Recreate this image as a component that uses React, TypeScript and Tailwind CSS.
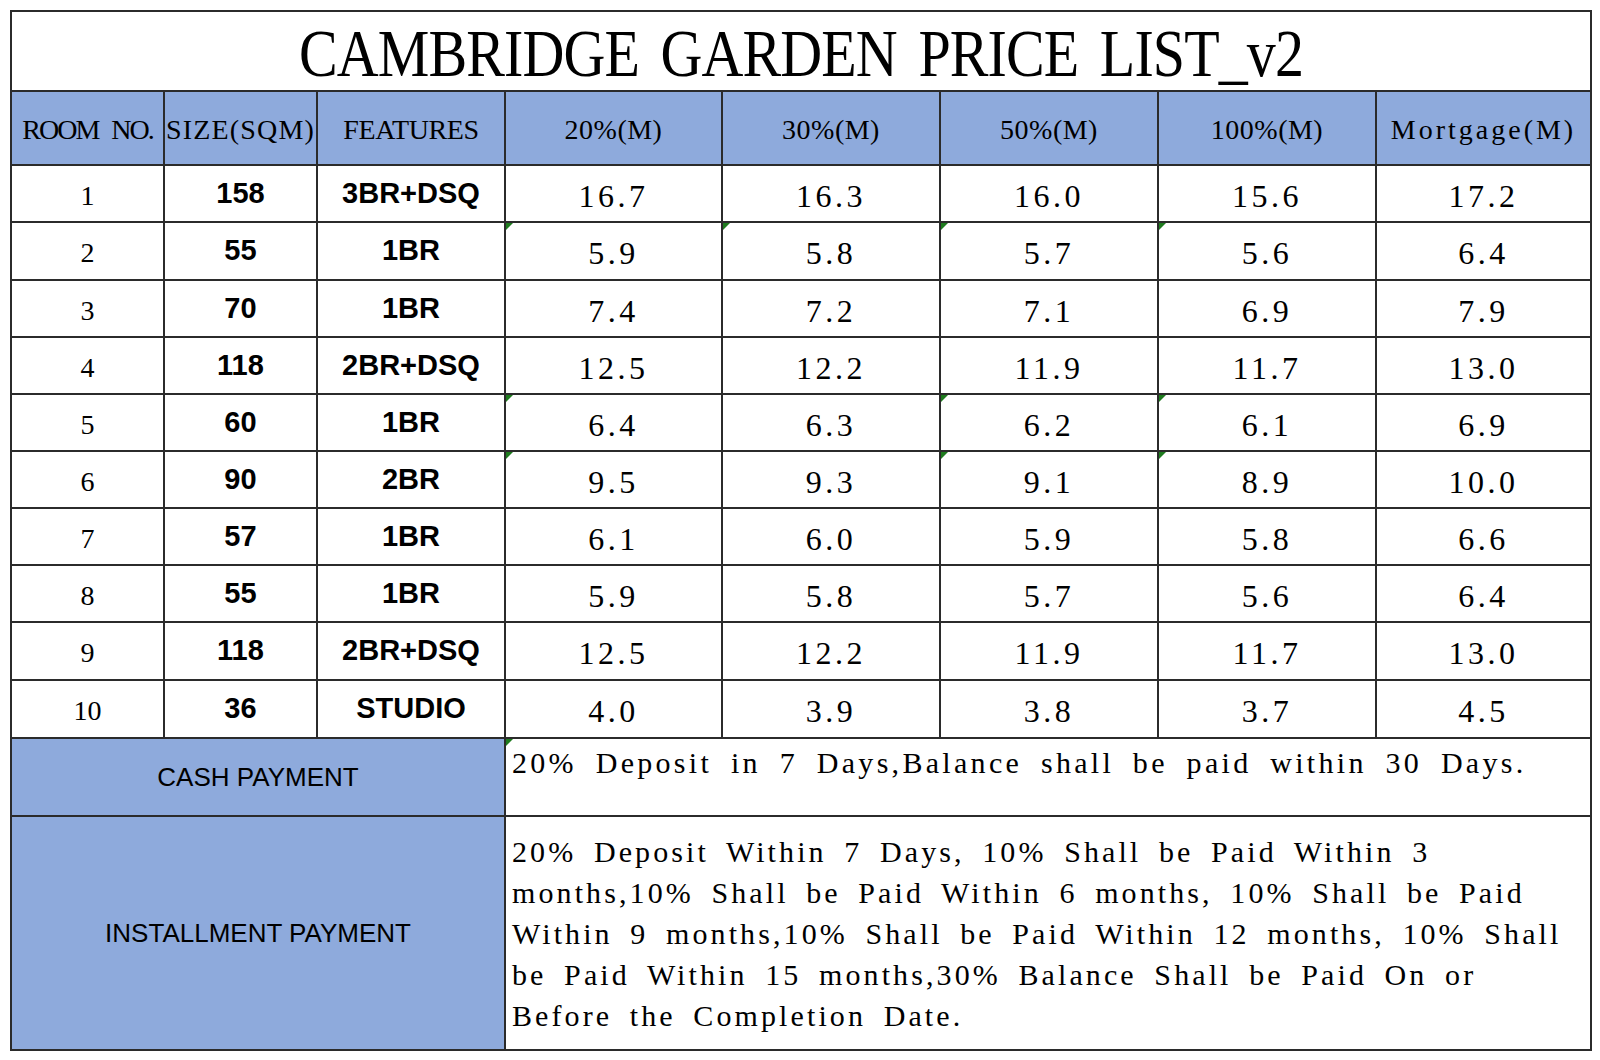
import React from "react"

const serif = { fontFamily: '"Liberation Serif", "Noto Sans CJK SC", serif' }
const sans = { fontFamily: '"Liberation Sans", Arial, sans-serif' }

const rows: (string | number)[][] = [
	[1, 158, "3BR+DSQ", "16.7", "16.3", "16.0", "15.6", "17.2"],
	[2, 55, "1BR", "5.9", "5.8", "5.7", "5.6", "6.4"],
	[3, 70, "1BR", "7.4", "7.2", "7.1", "6.9", "7.9"],
	[4, 118, "2BR+DSQ", "12.5", "12.2", "11.9", "11.7", "13.0"],
	[5, 60, "1BR", "6.4", "6.3", "6.2", "6.1", "6.9"],
	[6, 90, "2BR", "9.5", "9.3", "9.1", "8.9", "10.0"],
	[7, 57, "1BR", "6.1", "6.0", "5.9", "5.8", "6.6"],
	[8, 55, "1BR", "5.9", "5.8", "5.7", "5.6", "6.4"],
	[9, 118, "2BR+DSQ", "12.5", "12.2", "11.9", "11.7", "13.0"],
	[10, 36, "STUDIO", "4.0", "3.9", "3.8", "3.7", "4.5"],
]

// excel "number stored as text" markers
const marks: Record<number, number[]> = {
	1: [3, 4, 5, 6],
	4: [3, 5, 6],
	5: [3, 5, 6],
}

const rowHeights = ["h-[57px]", "h-[58px]", "h-[57px]", "h-[57px]", "h-[57px]", "h-[57px]", "h-[57px]", "h-[57px]", "h-[58px]", "h-[58px]"]

const headers = [
	{ label: "ROOM NO.", track: "tracking-[-2px] [word-spacing:8px]" },
	{ label: "SIZE(SQM)", track: "tracking-[1.2px]" },
	{ label: "FEATURES", track: "tracking-[-0.4px]" },
	{ label: "20%(M)", track: "tracking-[0.5px]" },
	{ label: "30%(M)", track: "tracking-[0.5px]" },
	{ label: "50%(M)", track: "tracking-[0.5px]" },
	{ label: "100%(M)", track: "tracking-[0.5px]" },
	{ label: "Mortgage(M)", track: "tracking-[3px]" },
]

function Mark() {
	return (
		<span className="absolute left-0 top-0 h-0 w-0 border-t-[7px] border-r-[7px] border-t-[#1e7b1e] border-r-transparent" />
	)
}

export default function App() {
	const cell = "border-2 border-[#2b2b2b] text-center align-middle p-0"

	return (
		<div className="min-h-[1060px] w-[1600px] bg-white pl-[10px] pt-[10px] text-black">
			<table className="w-[1580px] table-fixed border-collapse">
				<colgroup>
					<col className="w-[153px]" />
					<col className="w-[153px]" />
					<col className="w-[188px]" />
					<col className="w-[217px]" />
					<col className="w-[218px]" />
					<col className="w-[218px]" />
					<col className="w-[218px]" />
					<col className="w-[215px]" />
				</colgroup>
				<tbody>
					<tr className="h-[80px]">
						<td colSpan={8} className={cell}>
							<span
								className="relative top-[3px] inline-block scale-y-[1.15] text-[58px] leading-none tracking-[-0.9px] [word-spacing:8px] whitespace-nowrap"
								style={serif}
							>
								CAMBRIDGE GARDEN PRICE LIST_v2
							</span>
						</td>
					</tr>
					<tr className="h-[74px] bg-[#8eaadc]">
						{headers.map((h) => (
							<td key={h.label} className={cell}>
								<span className={`relative top-[2px] text-[28px] whitespace-nowrap ${h.track}`} style={serif}>
									{h.label}
								</span>
							</td>
						))}
					</tr>
					{rows.map((r, i) => (
						<tr key={i} className={rowHeights[i]}>
							<td className={cell}>
								<span className="relative top-[2px] text-[28px]" style={serif}>
									{r[0]}
								</span>
							</td>
							<td className={cell}>
								<span className="text-[29px] font-bold" style={sans}>
									{r[1]}
								</span>
							</td>
							<td className={cell}>
								<span className="text-[29px] font-bold" style={sans}>
									{r[2]}
								</span>
							</td>
							{r.slice(3).map((v, j) => (
								<td key={j} className={`${cell} relative`}>
									{marks[i]?.includes(j + 3) && <Mark />}
									<span className="relative top-[2px] text-[32px] tracking-[3.5px]" style={serif}>
										{v}
									</span>
								</td>
							))}
						</tr>
					))}
					<tr className="h-[78px]">
						<td colSpan={3} className={`${cell} bg-[#8eaadc]`}>
							<span className="text-[26px]" style={sans}>
								CASH PAYMENT
							</span>
						</td>
						<td colSpan={5} className={`${cell} relative !text-left !align-top pl-[6px] pt-[4px]`}>
							<Mark />
							<div className="text-[30px] leading-[40px] tracking-[3.3px] [word-spacing:8px] whitespace-pre" style={serif}>
								20% Deposit in 7 Days,Balance shall be paid within 30 Days.
							</div>
						</td>
					</tr>
					<tr className="h-[234px]">
						<td colSpan={3} className={`${cell} bg-[#8eaadc]`}>
							<span className="text-[26px]" style={sans}>
								INSTALLMENT PAYMENT
							</span>
						</td>
						<td colSpan={5} className={`${cell} !text-left pl-[6px]`}>
							<div className="text-[30px] leading-[41px] tracking-[3.1px] [word-spacing:7px] whitespace-pre" style={serif}>
								{"20% Deposit Within 7 Days, 10% Shall be Paid Within 3\n" +
									"months,10% Shall be Paid Within 6 months, 10% Shall be Paid\n" +
									"Within 9 months,10% Shall be Paid Within 12 months, 10% Shall\n" +
									"be Paid Within 15 months,30% Balance Shall be Paid On or\n" +
									"Before the Completion Date."}
							</div>
						</td>
					</tr>
				</tbody>
			</table>
		</div>
	)
}
